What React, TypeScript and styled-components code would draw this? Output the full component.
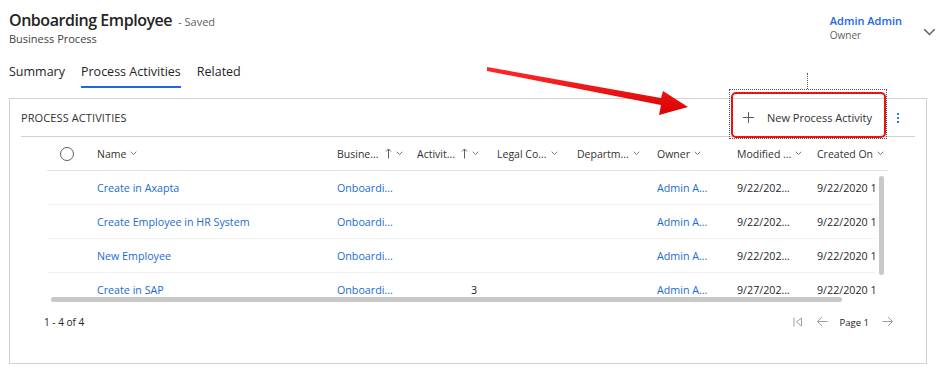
import * as React from 'react';
import styled, { createGlobalStyle } from 'styled-components';

const Global = createGlobalStyle`
    html, body {
        margin: 0;
        padding: 0;
        background: #fff;
    }
    body {
        font-family: "Segoe UI", "Open Sans", sans-serif;
        color: #242424;
    }
`;

const Page = styled.div`
    position: relative;
    width: 949px;
    height: 375px;
    overflow: hidden;
    background: #fff;
`;

const Header = styled.div`
    display: flex;
    justify-content: space-between;
    align-items: flex-start;
    padding: 8px 13px 0 9px;
`;

const TitleRow = styled.div`
    display: flex;
    align-items: baseline;
    gap: 6px;
`;

const Title = styled.span`
    font-size: 16px;
    font-weight: 600;
    letter-spacing: -0.45px;
    line-height: 24px;
    color: #242424;
`;

const Saved = styled.span`
    font-size: 11px;
    color: #616161;
`;

const Subtitle = styled.div`
    font-size: 11px;
    line-height: 14px;
    color: #424242;
`;

const OwnerBlock = styled.div`
    display: flex;
    align-items: flex-start;
    gap: 21px;
    padding-top: 5px;
`;

const OwnerName = styled.div`
    font-size: 11px;
    font-weight: 600;
    line-height: 16px;
    color: #2266e3;
`;

const OwnerLabel = styled.div`
    font-size: 10px;
    line-height: 12px;
    color: #616161;
`;

const OwnerChevron = styled.div`
    padding-top: 6px;
`;

const Tabs = styled.div`
    display: flex;
    gap: 16px;
    padding: 16px 0 0 9px;
    height: 29px;
`;

const Tab = styled.div<{ $active?: boolean }>`
    font-size: 12.5px;
    line-height: 20px;
    height: 26px;
    box-sizing: border-box;
    color: #242424;
    border-bottom: 2px solid ${p => (p.$active ? '#2266e3' : 'transparent')};
`;

const Panel = styled.div`
    margin: 7px 0 0 9px;
    width: 918px;
    height: 266px;
    box-sizing: border-box;
    border: 1px solid #d1d1d1;
    display: flex;
    flex-direction: column;
`;

const PanelHeader = styled.div`
    display: flex;
    align-items: center;
    justify-content: space-between;
    height: 37px;
    margin: 0 11px;
    border-bottom: 1px solid #d1d1d1;
`;

const PanelTitle = styled.span`
    font-size: 11px;
    color: #323130;
    letter-spacing: 0.1px;
`;

const Actions = styled.div`
    display: flex;
    align-items: center;
`;

const ButtonWrap = styled.div`
    position: relative;
    display: flex;
    align-items: center;
`;

const NewButton = styled.button`
    all: unset;
    display: flex;
    align-items: center;
    gap: 13px;
    height: 36px;
    padding: 0 14px 0 12px;
    font-size: 11px;
    color: #323130;
    cursor: pointer;
`;

const FocusRect = styled.div`
    position: absolute;
    left: -2px;
    right: -1px;
    top: -11px;
    bottom: -3px;
    border: 1px dotted #555;
    pointer-events: none;
`;

const Highlight = styled.div`
    position: absolute;
    left: 0;
    right: 0;
    top: -8px;
    bottom: -2px;
    border: 2px solid #f00e0e;
    border-radius: 5px;
    pointer-events: none;
`;

const DottedLine = styled.div`
    position: absolute;
    left: 76px;
    top: -27px;
    height: 16px;
    border-left: 1px dotted #555;
`;

const Kebab = styled.div`
    display: flex;
    flex-direction: column;
    gap: 2px;
    padding: 0 16px 0 11px;
    span {
        width: 2px;
        height: 2px;
        background: #3a7bc8;
    }
`;

const GridArea = styled.div`
    margin-left: 37px;
    width: 845px;
`;

const HeadRow = styled.div`
    display: flex;
    align-items: center;
    height: 33px;
    border-bottom: 1px solid #e1e1e1;
    width: 841px;
`;

const Cell = styled.div<{ $w: number; $link?: boolean; $pad?: number }>`
    flex: 0 0 ${p => p.$w}px;
    width: ${p => p.$w}px;
    box-sizing: border-box;
    padding-left: ${p => p.$pad ?? 0}px;
    padding-right: 8px;
    display: flex;
    align-items: center;
    gap: 4px;
    font-size: 10.7px;
    white-space: nowrap;
    overflow: hidden;
    color: ${p => (p.$link ? '#1a6bd0' : '#1f1f1f')};
`;

const HeadText = styled.span`
    font-size: 10.5px;
    color: #323130;
`;

const Clip = styled.span<{ $cut?: boolean }>`
    display: block;
    max-width: ${p => (p.$cut ? 58 : 56)}px;
    overflow: hidden;
    text-overflow: ${p => (p.$cut ? 'clip' : 'ellipsis')};
`;

const Circle = styled.div`
    width: 12px;
    height: 12px;
    border: 1px solid #605e5c;
    border-radius: 50%;
    margin-left: 13px;
`;

const BodyWrap = styled.div`
    display: flex;
    gap: 4px;
`;

const Viewport = styled.div`
    width: 828px;
    height: 126px;
    overflow: hidden;
`;

const Row = styled.div`
    display: flex;
    align-items: center;
    height: 33px;
    border-bottom: 1px solid #f0f0f0;
`;

const VScroll = styled.div`
    margin-top: 5px;
    width: 5px;
    height: 99px;
    border-radius: 3px;
    background: #c8c8c8;
`;

const HScroll = styled.div`
    margin-left: 4px;
    width: 791px;
    height: 5px;
    border-radius: 3px;
    background: #c8c8c8;
`;

const Footer = styled.div`
    display: flex;
    align-items: center;
    justify-content: space-between;
    padding: 12px 0 0 34px;
    width: 884px;
    box-sizing: border-box;
`;

const Count = styled.span`
    font-size: 10px;
    color: #242424;
`;

const Pager = styled.div`
    display: flex;
    align-items: center;
    gap: 12px;
`;

const PageLabel = styled.span`
    font-size: 9.5px;
    color: #242424;
    margin: 2px 1px 0 0;
`;

const Arrow = styled.svg`
    position: absolute;
    left: 0;
    top: 0;
    pointer-events: none;
`;

function Chevron({ size = 7, color = '#605e5c' }: { size?: number; color?: string }) {
    return (
        <svg width={size} height={size * 0.6} viewBox="0 0 10 6" fill="none">
            <path d="M1 1l4 4 4-4" stroke={color} strokeWidth="1.2" />
        </svg>
    );
}

function SortUp() {
    return (
        <svg width="7" height="11" viewBox="0 0 7 11" fill="none" style={{ marginLeft: 2 }}>
            <path d="M3.5 10.5V1M1 3.5l2.5-2.5 2.5 2.5" stroke="#605e5c" strokeWidth="1" />
        </svg>
    );
}

type Col = { label: string; w: number; sort?: boolean };

const cols: Col[] = [
    { label: 'Name', w: 240 },
    { label: 'Busine...', w: 80, sort: true },
    { label: 'Activit...', w: 80, sort: true },
    { label: 'Legal Co...', w: 80 },
    { label: 'Departm...', w: 80 },
    { label: 'Owner', w: 80 },
    { label: 'Modified ...', w: 80 },
    { label: 'Created On', w: 80 },
];

const rows = [
    { name: 'Create in Axapta', activity: '', modified: '9/22/2020 10:15 AM' },
    { name: 'Create Employee in HR System', activity: '', modified: '9/22/2020 10:16 AM' },
    { name: 'New Employee', activity: '', modified: '9/22/2020 10:17 AM' },
    { name: 'Create in SAP', activity: '3', modified: '9/27/2020 11:02 AM' },
];

export default function App() {
    return (
        <Page>
            <Global />
            <Header>
                <div>
                    <TitleRow>
                        <Title>Onboarding Employee</Title>
                        <Saved>- Saved</Saved>
                    </TitleRow>
                    <Subtitle>Business Process</Subtitle>
                </div>
                <OwnerBlock>
                    <div>
                        <OwnerName>Admin Admin</OwnerName>
                        <OwnerLabel>Owner</OwnerLabel>
                    </div>
                    <OwnerChevron>
                        <Chevron size={13} color="#616161" />
                    </OwnerChevron>
                </OwnerBlock>
            </Header>
            <Tabs>
                <Tab>Summary</Tab>
                <Tab $active>Process Activities</Tab>
                <Tab>Related</Tab>
            </Tabs>
            <Panel>
                <PanelHeader>
                    <PanelTitle>PROCESS ACTIVITIES</PanelTitle>
                    <Actions>
                        <ButtonWrap>
                            <NewButton>
                                <svg width="11" height="11" viewBox="0 0 11 11" fill="none">
                                    <path d="M5.5 0v11M0 5.5h11" stroke="#605e5c" strokeWidth="1" />
                                </svg>
                                New Process Activity
                            </NewButton>
                            <DottedLine />
                            <FocusRect />
                            <Highlight />
                        </ButtonWrap>
                        <Kebab>
                            <span />
                            <span />
                            <span />
                        </Kebab>
                    </Actions>
                </PanelHeader>
                <GridArea>
                    <HeadRow>
                        <Cell $w={50}>
                            <Circle />
                        </Cell>
                        {cols.map(c => (
                            <Cell key={c.label} $w={c.w}>
                                <HeadText>{c.label}</HeadText>
                                {c.sort && <SortUp />}
                                <Chevron />
                            </Cell>
                        ))}
                    </HeadRow>
                    <BodyWrap>
                        <Viewport>
                            {rows.map(r => (
                                <Row key={r.name}>
                                    <Cell $w={50} />
                                    <Cell $w={240} $link>
                                        {r.name}
                                    </Cell>
                                    <Cell $w={80} $link>
                                        <Clip>Onboarding Employee</Clip>
                                    </Cell>
                                    <Cell $w={80} $pad={54}>
                                        {r.activity}
                                    </Cell>
                                    <Cell $w={80} />
                                    <Cell $w={80} />
                                    <Cell $w={80} $link>
                                        <Clip>Admin Admin</Clip>
                                    </Cell>
                                    <Cell $w={80}>
                                        <Clip>{r.modified}</Clip>
                                    </Cell>
                                    <Cell $w={80}>
                                        <Clip $cut>9/22/2020 10:14 AM</Clip>
                                    </Cell>
                                </Row>
                            ))}
                        </Viewport>
                        <VScroll />
                    </BodyWrap>
                    <HScroll />
                </GridArea>
                <Footer>
                    <Count>1 - 4 of 4</Count>
                    <Pager>
                        <svg width="10" height="10" viewBox="0 0 10 10" fill="none">
                            <path d="M1 0.5v9M8.5 1L3.5 5l5 4z" stroke="#a19f9d" strokeWidth="1" />
                        </svg>
                        <svg width="12" height="11" viewBox="0 0 12 11" fill="none" style={{ marginLeft: 1 }}>
                            <path d="M11.5 5.5H1.5M6 1L1.5 5.5 6 10" stroke="#a19f9d" strokeWidth="1" />
                        </svg>
                        <PageLabel>Page 1</PageLabel>
                        <svg width="12" height="11" viewBox="0 0 12 11" fill="none">
                            <path d="M0.5 5.5h10M6 1l4.5 4.5L6 10" stroke="#a19f9d" strokeWidth="1" />
                        </svg>
                    </Pager>
                </Footer>
            </Panel>
            <Arrow width="949" height="375" viewBox="0 0 949 375">
                <defs>
                    <linearGradient id="ar" x1="0" y1="0" x2="0" y2="1">
                        <stop offset="0" stopColor="#ff2a2a" />
                        <stop offset="1" stopColor="#d80000" />
                    </linearGradient>
                </defs>
                <polygon
                    points="487,67 661,98 663,91 688,107 659,115 661,105 487,71"
                    fill="url(#ar)"
                />
            </Arrow>
        </Page>
    );
}
